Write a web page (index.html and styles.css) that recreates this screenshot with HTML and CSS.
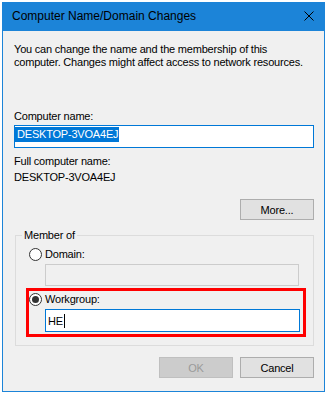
FILE: index.html
```html
<!DOCTYPE html>
<html lang="en">
<head>
    <meta charset="UTF-8">
    <title>Computer Name/Domain Changes</title>
    <link rel="stylesheet" href="styles.css">
</head>
<body>
    <div class="dialog">
        <div class="titlebar">
            <span class="title">Computer Name/Domain Changes</span>
            <svg class="close" viewBox="0 0 10 10" width="10" height="10">
                <path d="M0.5 0.5 L9.5 9.5 M9.5 0.5 L0.5 9.5" stroke="#000" stroke-width="1" fill="none"/>
            </svg>
        </div>
        <div class="content">
            <p class="intro">You can change the name and the membership of this<br>computer. Changes might affect access to network resources.</p>

            <div class="label first">Computer name:</div>
            <div class="field focus"><span class="selected">DESKTOP-3VOA4EJ</span></div>

            <div class="label">Full computer name:</div>
            <div class="value">DESKTOP-3VOA4EJ</div>

            <div class="more-row">
                <button class="btn">More...</button>
            </div>

            <fieldset class="group">
                <legend>Member of</legend>
                <div class="radio-row"><span class="radio"></span>Domain:</div>
                <div class="field disabled indent"></div>
                <div class="highlight">
                    <div class="radio-row"><span class="radio checked"></span>Workgroup:</div>
                    <div class="field focus indent wide"><span class="typed">HE</span><span class="caret"></span></div>
                </div>
            </fieldset>

            <div class="actions">
                <button class="btn disabled">OK</button>
                <button class="btn">Cancel</button>
            </div>
        </div>
    </div>
</body>
</html>
```

FILE: styles.css
```css
body {
    margin: 0;
    background: #fff;
    font-family: "Liberation Sans", Arial, sans-serif;
    font-size: 11px;
    letter-spacing: -0.2px;
    color: #000;
}

.dialog {
    box-sizing: border-box;
    width: 323px;
    height: 390px;
    margin: 2px 0 0 2px;
    border: 1px solid #1c84d8;
    background: #f0f0f0;
}

.titlebar {
    height: 28px;
    background: #1c84d8;
    display: flex;
    align-items: center;
    justify-content: space-between;
    padding: 0 10px 0 9px;
}

.title {
    font-size: 12px;
    letter-spacing: 0;
    color: #000;
    margin-top: -2px;
}

.close {
    display: block;
    margin-top: -2px;
}

.content {
    padding: 12px 10px 0 11px;
}

.intro {
    margin: 0;
    line-height: 13px;
    white-space: nowrap;
}

.label {
    line-height: 13px;
    margin-top: 7px;
}

.label.first {
    margin-top: 41px;
}

.value {
    line-height: 13px;
    margin-top: 3px;
}

.field {
    box-sizing: border-box;
    height: 23px;
    margin-top: 2px;
    border: 1px solid #0078d7;
    background: #fff;
    display: flex;
    align-items: flex-start;
    padding-top: 1px;
}

.field.disabled {
    height: 22px;
    border-color: #cccccc;
    background: #f0f0f0;
}

.field.indent {
    margin-left: 16px;
    width: 254px;
}

.field.wide {
    width: 255px;
    padding-top: 4px;
    padding-left: 2px;
}

.selected {
    background: #0078d7;
    color: #fff;
    line-height: 15px;
    padding: 0 1px 0 2px;
}

.typed {
    line-height: 15px;
}

.caret {
    width: 1px;
    height: 14px;
    background: #000;
    margin-left: 1px;
}

.more-row {
    display: flex;
    justify-content: flex-end;
    margin-top: 15px;
}

.btn {
    box-sizing: border-box;
    width: 74px;
    height: 21px;
    margin: 0;
    padding: 0;
    border: 1px solid #adadad;
    background: #e1e1e1;
    font-family: "Liberation Sans", Arial, sans-serif;
    font-size: 11px;
    letter-spacing: -0.2px;
    color: #000;
}

.btn.disabled {
    border-color: #bfbfbf;
    background: #cccccc;
    color: #9a9a9a;
}

.group {
    box-sizing: border-box;
    width: 299px;
    margin: 8px 0 0 1px;
    padding: 4px 0 8px 13px;
    border: 1px solid #dcdcdc;
}

.group legend {
    line-height: 14px;
    padding: 0 2px;
    margin-left: -7px;
}

.radio-row {
    display: flex;
    align-items: center;
    height: 16px;
    line-height: 13px;
}

.radio {
    box-sizing: border-box;
    width: 13px;
    height: 13px;
    border: 1px solid #333;
    border-radius: 50%;
    background: #fff;
    margin-right: 3px;
    display: flex;
    align-items: center;
    justify-content: center;
}

.radio.checked::after {
    content: "";
    width: 7px;
    height: 7px;
    border-radius: 50%;
    background: #333;
}

.highlight {
    box-sizing: border-box;
    width: 280px;
    margin: 2px 0 0 -3px;
    padding: 0 0 2px 0;
    border: 3px solid #ff0000;
}

.actions {
    display: flex;
    justify-content: flex-end;
    gap: 7px;
    margin-top: 11px;
}
```
